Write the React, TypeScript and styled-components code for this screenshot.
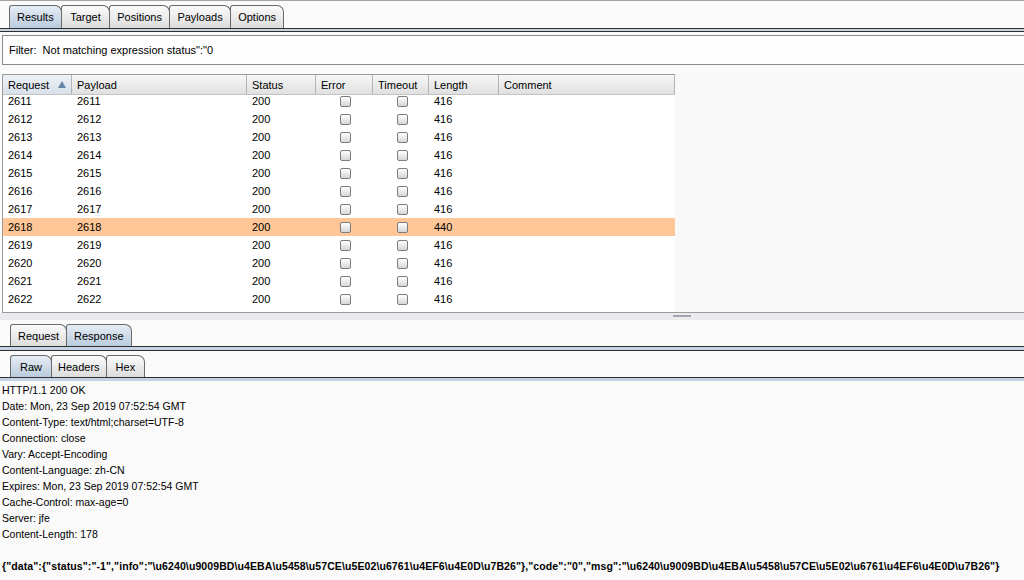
import React from "react";
import styled, { createGlobalStyle } from "styled-components";

const Global = createGlobalStyle`
  html, body { margin: 0; padding: 0; background: #fafafa; }
  * { box-sizing: border-box; }
`;

const Page = styled.div`
  width: 1024px;
  height: 580px;
  overflow: hidden;
  background: #fafafa;
  border-top: 1px solid #a4a4a4;
  font-family: Tahoma, "Liberation Sans", Arial, sans-serif;
  font-size: 11px;
  color: #000;
  display: flex;
  flex-direction: column;
`;

const TabStrip = styled.div<{ $top: number; $left: number }>`
  display: flex;
  align-items: flex-end;
  margin-top: ${(p) => p.$top}px;
  padding-left: ${(p) => p.$left}px;
`;

const Tab = styled.div<{ $active?: boolean; $h: number; $pad: number }>`
  height: ${(p) => p.$h}px;
  padding: 0 ${(p) => p.$pad}px;
  display: flex;
  align-items: center;
  border: 1px solid #6a6a6a;
  border-bottom: none;
  border-radius: 3px 7px 0 0;
  margin-right: -1px;
  background: ${(p) =>
    p.$active
      ? "linear-gradient(#e6edf5, #b9cbdd)"
      : "linear-gradient(#fbfbfb, #dcdcdc)"};
  white-space: nowrap;
`;

const TabBand = styled.div<{ $h: number; $bottom?: boolean }>`
  height: ${(p) => p.$h}px;
  border-top: 1px solid #303030;
  border-bottom: ${(p) => (p.$bottom ? "1px solid #303030" : "none")};
  background: #c3d3e3;
`;

const FilterBox = styled.div`
  margin: 3px 0 0 2px;
  height: 30px;
  border: 1px solid #8a8a8a;
  border-right: none;
  background: #fdfdfd;
  display: flex;
  align-items: center;
  padding-left: 6px;
  white-space: pre;
`;

const TableArea = styled.div`
  margin: 9px 0 0 2px;
  height: 239px;
  display: flex;
  border-bottom: 1px solid #9a9a9a;
  background: #f8f8f8;
`;

const Table = styled.div`
  width: 673px;
  display: flex;
  flex-direction: column;
  background: #fff;
  border-left: 1px solid #9a9a9a;
`;

const cols = "69px 175px 69px 57px 56px 70px 176px";

const HeaderRow = styled.div`
  display: grid;
  grid-template-columns: ${cols};
  height: 21px;
  border-top: 1px solid #9a9a9a;
  border-bottom: 1px solid #c4c4c4;
  background: linear-gradient(#f6f6f6, #e0e0e0);
`;

const HeaderCell = styled.div<{ $sorted?: boolean }>`
  display: flex;
  align-items: center;
  justify-content: space-between;
  padding: 0 5px 0 5px;
  border-right: 1px solid #b4b4b4;
  background: ${(p) => (p.$sorted ? "linear-gradient(#eef2f7, #d8e0ea)" : "transparent")};
`;

const SortArrow = styled.span`
  width: 0;
  height: 0;
  border-left: 4px solid transparent;
  border-right: 4px solid transparent;
  border-bottom: 7px solid #6585a8;
`;

const Body = styled.div`
  flex: 1;
  overflow: hidden;
`;

const Rows = styled.div`
  margin-top: -3px;
`;

const Row = styled.div<{ $hl?: boolean }>`
  display: grid;
  grid-template-columns: ${cols};
  height: 18px;
  background: ${(p) => (p.$hl ? "#ffc797" : "transparent")};
`;

const Cell = styled.div<{ $center?: boolean }>`
  display: flex;
  align-items: center;
  justify-content: ${(p) => (p.$center ? "center" : "flex-start")};
  padding-left: ${(p) => (p.$center ? 0 : 5)}px;
`;

const Check = styled.span`
  width: 11px;
  height: 11px;
  border: 1px solid #7c7c7c;
  border-radius: 2px;
  background: linear-gradient(#ffffff, #d6d6d6);
  margin-left: 2px;
`;

const Splitter = styled.div`
  height: 7px;
  background: #ebebef;
  display: flex;
  align-items: flex-start;
`;

const Grip = styled.div`
  margin: 2px 0 0 673px;
  width: 18px;
  height: 2px;
  background: #a3a6b0;
`;

const Gap = styled.div<{ $h: number }>`
  height: ${(p) => p.$h}px;
`;

const Content = styled.div`
  padding: 1px 0 0 2px;
  line-height: 16px;
  font-size: 10.5px;
  white-space: pre;
`;

const Json = styled.div`
  font-weight: bold;
  margin-top: 16px;
  letter-spacing: 0.1px;
`;

const rows = Array.from({ length: 12 }, (_, i) => 2611 + i);

export default function App() {
  return (
    <Page>
      <Global />
      <TabStrip $top={4} $left={9}>
        <Tab $h={23} $pad={7} $active>Results</Tab>
        <Tab $h={23} $pad={8.5}>Target</Tab>
        <Tab $h={23} $pad={7}>Positions</Tab>
        <Tab $h={23} $pad={7.5}>Payloads</Tab>
        <Tab $h={23} $pad={7}>Options</Tab>
      </TabStrip>
      <TabBand $h={4} $bottom />
      <FilterBox>{'Filter:  Not matching expression status":"0'}</FilterBox>
      <TableArea>
        <Table>
          <HeaderRow>
            <HeaderCell $sorted>
              Request <SortArrow />
            </HeaderCell>
            <HeaderCell>Payload</HeaderCell>
            <HeaderCell>Status</HeaderCell>
            <HeaderCell>Error</HeaderCell>
            <HeaderCell>Timeout</HeaderCell>
            <HeaderCell>Length</HeaderCell>
            <HeaderCell>Comment</HeaderCell>
          </HeaderRow>
          <Body>
            <Rows>
              {rows.map((n) => (
                <Row key={n} $hl={n === 2618}>
                  <Cell>{n}</Cell>
                  <Cell>{n}</Cell>
                  <Cell>200</Cell>
                  <Cell $center>
                    <Check />
                  </Cell>
                  <Cell $center>
                    <Check />
                  </Cell>
                  <Cell>{n === 2618 ? 440 : 416}</Cell>
                  <Cell />
                </Row>
              ))}
            </Rows>
          </Body>
        </Table>
      </TableArea>
      <Splitter>
        <Grip />
      </Splitter>
      <TabStrip $top={4} $left={10}>
        <Tab $h={22} $pad={7}>Request</Tab>
        <Tab $h={22} $pad={7} $active>Response</Tab>
      </TabStrip>
      <TabBand $h={5} $bottom />
      <Gap $h={4} />
      <TabStrip $top={0} $left={10}>
        <Tab $h={22} $pad={9} $active>Raw</Tab>
        <Tab $h={22} $pad={6}>Headers</Tab>
        <Tab $h={22} $pad={9}>Hex</Tab>
      </TabStrip>
      <TabBand $h={4} />
      <Content>
        {`HTTP/1.1 200 OK
Date: Mon, 23 Sep 2019 07:52:54 GMT
Content-Type: text/html;charset=UTF-8
Connection: close
Vary: Accept-Encoding
Content-Language: zh-CN
Expires: Mon, 23 Sep 2019 07:52:54 GMT
Cache-Control: max-age=0
Server: jfe
Content-Length: 178`}
        <Json>{`{"data":{"status":"-1","info":"\\u6240\\u9009BD\\u4EBA\\u5458\\u57CE\\u5E02\\u6761\\u4EF6\\u4E0D\\u7B26"},"code":"0","msg":"\\u6240\\u9009BD\\u4EBA\\u5458\\u57CE\\u5E02\\u6761\\u4EF6\\u4E0D\\u7B26"}`}</Json>
      </Content>
    </Page>
  );
}
